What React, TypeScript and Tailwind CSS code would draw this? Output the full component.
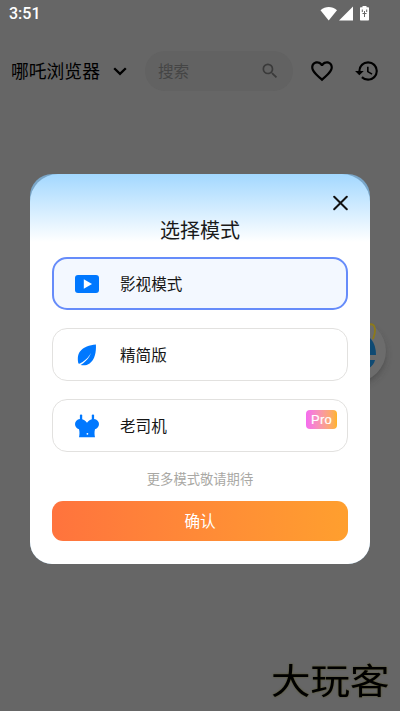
import React from 'react';
import { MdSearch, MdFavoriteBorder, MdHistory } from 'react-icons/md';

const VideoIcon = () => (
  <svg width="24" height="18" viewBox="0 0 24 18">
    <rect width="24" height="18" rx="3" fill="#0078ff" />
    <path d="M8.800 4.200v9.600L17 9z" fill="#fff" />
  </svg>
);

const LeafIcon = () => (
  <svg width="20" height="22" viewBox="0 0 20 22">
    <path
      d="M18.900.6C12.500 1.300 6.500 3.200 3 7.500.4 11 .5 15.500 1.400 19.600c1.400.4 2.800-.5 4.200-1.500 3.600-2.600 6.500-5.600 8.400-9.100-1.600 4.200-4.300 7.600-7.800 10.200-1 .7-2 1.300-2.600 1.700 2.900.9 6.300.5 9-1.400C18 15.700 19.300 8 18.900.6z"
      fill="#0078ff"
    />
  </svg>
);

const TopIcon = () => (
  <svg width="24" height="24" viewBox="0 0 24 24">
    <g fill="#0078ff">
      <rect x="4.900" y=".5" width="2.300" height="7" rx="1" />
      <rect x="16.800" y=".5" width="2.300" height="7" rx="1" />
      <path d="M5 5C2 5.300 0 7.400 0 10c0 2.400 1.600 4.500 4 5.300.7 2.500.6 5.300 0 7.900h16c-.6-2.600-.7-5.400 0-7.900 2.400-.8 4-2.900 4-5.300 0-2.600-2-4.700-5-5-3 .2-5.500 1.500-7 3.800C10.500 6.500 8 5.200 5 5z" />
    </g>
    <circle cx="12.400" cy="19.800" r=".9" fill="#fff" />
  </svg>
);

interface ModeOptionProps {
  icon: React.ReactNode;
  label: string;
  selected?: boolean;
  badge?: string;
}

const ModeOption: React.FC<ModeOptionProps> = ({ icon, label, selected, badge }) => {
  return (
    <button
      className={`relative flex h-[53px] w-full items-center rounded-[15px] text-left ${
        selected ? 'border-2 border-[#668cfa] bg-[#f3f8ff] pl-[21px]' : 'border border-[#e2e1df] bg-white pl-[22px]'
      }`}
    >
      <span className="mr-[21px] flex w-6 justify-center">{icon}</span>
      <span className="text-[15.600px] leading-none text-[#161616]">{label}</span>
      {badge && (
        <span className="absolute top-[10px] right-[10px] flex h-[19px] w-[31px] items-center justify-center rounded-[4px] bg-gradient-to-r from-[#f56bf0] to-[#ffb41f] font-['Liberation_Sans'] text-[13px] leading-none tracking-[0.300px] text-white [-webkit-text-stroke:0.200px_#fff]">
          {badge}
        </span>
      )}
    </button>
  );
};

const StatusBar = () => (
  <div className="flex h-7 items-center justify-between pr-[30px] pl-[9px] text-white">
    <span className="font-['Roboto'] text-[16px] leading-[28px] font-medium">3:51</span>
    <svg width="50" height="16" viewBox="0 0 50 16" fill="#fff">
      <path d="M.5 4.200C5.500-.2 12-.2 17 4.200L8.700 14.500z" />
      <path d="M33 .5V14.500H19z" />
      <path d="M42.500 1.300V0h4v1.300H48c.7 0 1 .4 1 1v11.200c0 .7-.4 1.100-1 1.100h-7c-.7 0-1-.4-1-1.100V2.300c0-.7.4-1 1-1z" />
      <path d="M44.500 5v6M42.300 3.500v2.500M46.700 3.500v2.500M42.500 7.500h4" fill="none" stroke="#666" strokeWidth="1" />
    </svg>
  </div>
);

const Header = () => (
  <header className="mt-[23px] flex h-10 items-center pl-[11px] text-black">
    <span className="text-[17.800px] leading-none whitespace-nowrap">哪吒浏览器</span>
    <svg className="ml-[13px]" width="14" height="9" viewBox="0 0 14 9" fill="none" stroke="#000" strokeWidth="2.300">
      <path d="M1.200 1.200 7 6.900l5.800-5.700" />
    </svg>
    <div className="ml-[18px] flex h-10 w-[148px] items-center justify-between rounded-full bg-[#626262] pr-[13px] pl-[13px]">
      <span className="text-[15.600px] leading-none text-[#454545]">搜索</span>
      <MdSearch className="text-[20px] text-[#3a3a3a]" />
    </div>
    <MdFavoriteBorder className="ml-[16px] text-[26px]" />
    <MdHistory className="ml-[19px] text-[26px]" />
  </header>
);

const FloatingButton = () => (
  <svg className="absolute top-[310px] left-[320px]" width="76" height="84" viewBox="0 0 76 84">
    <defs>
      <filter id="soft" x="-30%" y="-30%" width="160%" height="160%">
        <feGaussianBlur stdDeviation="3.500" />
      </filter>
    </defs>
    <circle cx="36" cy="45" r="29" fill="#333" opacity=".5" filter="url(#soft)" />
    <circle cx="35" cy="41" r="31" fill="#6c6c6c" />
    <path d="M38 23c11 0 18 9 18 22H38z" fill="#0f4a73" />
    <path d="M38 50h17c-1 4-3 6-6 8l-11 2z" fill="#0f4a73" />
    <path d="M47 15c6-2 8 0 8 6 0 3-1 5-2 8" fill="none" stroke="#8d7a1a" strokeWidth="1.800" />
  </svg>
);

const ModeDialog = () => (
  <div className="absolute top-[174px] left-[30px] w-[340px] overflow-hidden rounded-[22px] bg-[#7aa6c8]">
    <div className="flex h-[390px] flex-col rounded-t-[28px] bg-white bg-[linear-gradient(to_bottom,#a3d8ff_0,#ffffff_68px)] px-[22px]">
      <div className="flex justify-end pt-[21px]">
        <svg width="15" height="16" viewBox="0 0 15 16" stroke="#111" strokeWidth="2" strokeLinecap="round">
          <path d="M1.200 1.700l12.600 12.600M13.800 1.700 1.200 14.300" />
        </svg>
      </div>
      <h2 className="mt-[9px] text-center text-[20px] leading-[20px] text-[#1a1a1a]">选择模式</h2>
      <div className="mt-[17px] flex flex-col gap-[18px]">
        <ModeOption icon={<VideoIcon />} label="影视模式" selected />
        <ModeOption icon={<LeafIcon />} label="精简版" />
        <ModeOption icon={<TopIcon />} label="老司机" badge="Pro" />
      </div>
      <p className="mt-[20px] text-center text-[13.300px] leading-[14px] text-[#a9a8a4]">更多模式敬请期待</p>
      <button className="mt-[15px] h-10 shrink-0 rounded-[11px] bg-gradient-to-r from-[#ff733d] to-[#ff9f2e] text-[15.600px] leading-none text-white">
        确认
      </button>
    </div>
  </div>
);

const App: React.FC = () => {
  return (
    <div className="relative h-[711px] w-[400px] overflow-hidden bg-[#666666] font-['Noto_Sans_CJK_SC','Noto_Sans',sans-serif]">
      <StatusBar />
      <Header />
      <FloatingButton />
      <ModeDialog />
      <span className="absolute top-[659px] left-[271px] origin-center scale-y-[0.880] text-[39.500px] leading-[40px] whitespace-nowrap text-black [text-shadow:0_0_2px_#55501c]">
        大玩客
      </span>
    </div>
  );
};

export default App;
